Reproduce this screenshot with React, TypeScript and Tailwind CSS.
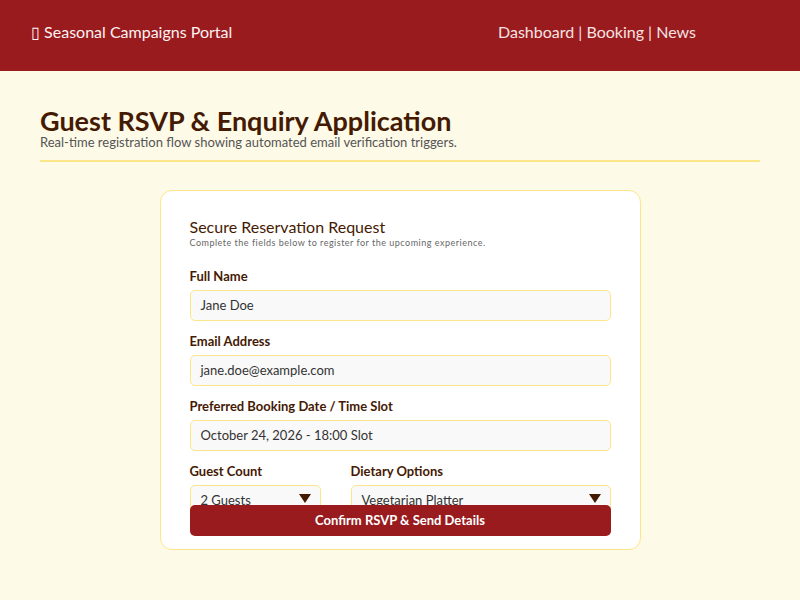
import React from 'react'

const font = { fontFamily: 'Lato, "Open Sans", sans-serif' }

function Field({ label, value }: { label: string; value: string }) {
  return (
    <div className="flex flex-col">
      <label className="text-[13px] font-bold text-[#451a03] leading-4 mb-[6px]">{label}</label>
      <div className="h-[31px] flex items-center px-[10px] bg-[#f9f9f9] border border-[#fde68a] rounded-[5px] text-[13px] text-[#333]">
        {value}
      </div>
    </div>
  )
}

function Select({ label, value, width }: { label: string; value: string; width: string }) {
  return (
    <div className={`flex flex-col ${width}`}>
      <label className="text-[13px] font-bold text-[#451a03] leading-4 mb-[6px]">{label}</label>
      <div className="shrink-0 h-[31px] flex items-center justify-between pl-[10px] pr-[9px] bg-[#f9f9f9] border border-[#fde68a] rounded-[5px] text-[13px] text-[#333]">
        <span>{value}</span>
        <svg width="12" height="9" viewBox="0 0 12 9" className="-mt-[4px]" aria-hidden="true">
          <path d="M0 0h12L6 9z" fill="#451a03" />
        </svg>
      </div>
    </div>
  )
}

export default function App() {
  return (
    <div className="min-h-[600px] bg-[#fefae8]" style={font}>
      <header className="h-[71px] bg-[#991b1e] flex items-start justify-between pt-[22px] pl-[31px] pr-[104px]">
        <div className="text-[16px] leading-5 text-[#fdf2f2]">▯ Seasonal Campaigns Portal</div>
        <nav className="text-[16px] leading-5 text-[#f8e3e3]">Dashboard | Booking | News</nav>
      </header>

      <main className="px-[40px] pt-[36px]">
        <div className="border-b-2 border-[#fde68a] pb-[10px]">
          <h1 className="text-[27px] font-bold text-[#451a03] leading-[27px]">Guest RSVP &amp; Enquiry Application</h1>
          <p className="text-[13px] text-[#555] leading-4">Real-time registration flow showing automated email verification triggers.</p>
        </div>

        <div className="mx-auto mt-[28px] w-[481px] bg-white border border-[#fde68a] rounded-[12px] px-[29px] pt-[26px] pb-[13px]">
          <h2 className="text-[16px] text-[#451a03] leading-5">Secure Reservation Request</h2>
          <p className="text-[9px] tracking-[0.5px] text-[#666] leading-3 mb-[19px]">Complete the fields below to register for the upcoming experience.</p>

          <div className="flex flex-col gap-[12px]">
            <Field label="Full Name" value="Jane Doe" />
            <Field label="Email Address" value="jane.doe@example.com" />
            <Field label="Preferred Booking Date / Time Slot" value="October 24, 2026 - 18:00 Slot" />
            <div className="flex gap-[30px] h-[42px]">
              <Select label="Guest Count" value="2 Guests" width="w-[131px]" />
              <Select label="Dietary Options" value="Vegetarian Platter" width="flex-1" />
            </div>
          </div>

          <button className="relative w-full h-[31px] bg-[#991b1e] text-white text-[13px] font-bold rounded-[5px]">
            Confirm RSVP &amp; Send Details
          </button>
        </div>
      </main>
    </div>
  )
}
